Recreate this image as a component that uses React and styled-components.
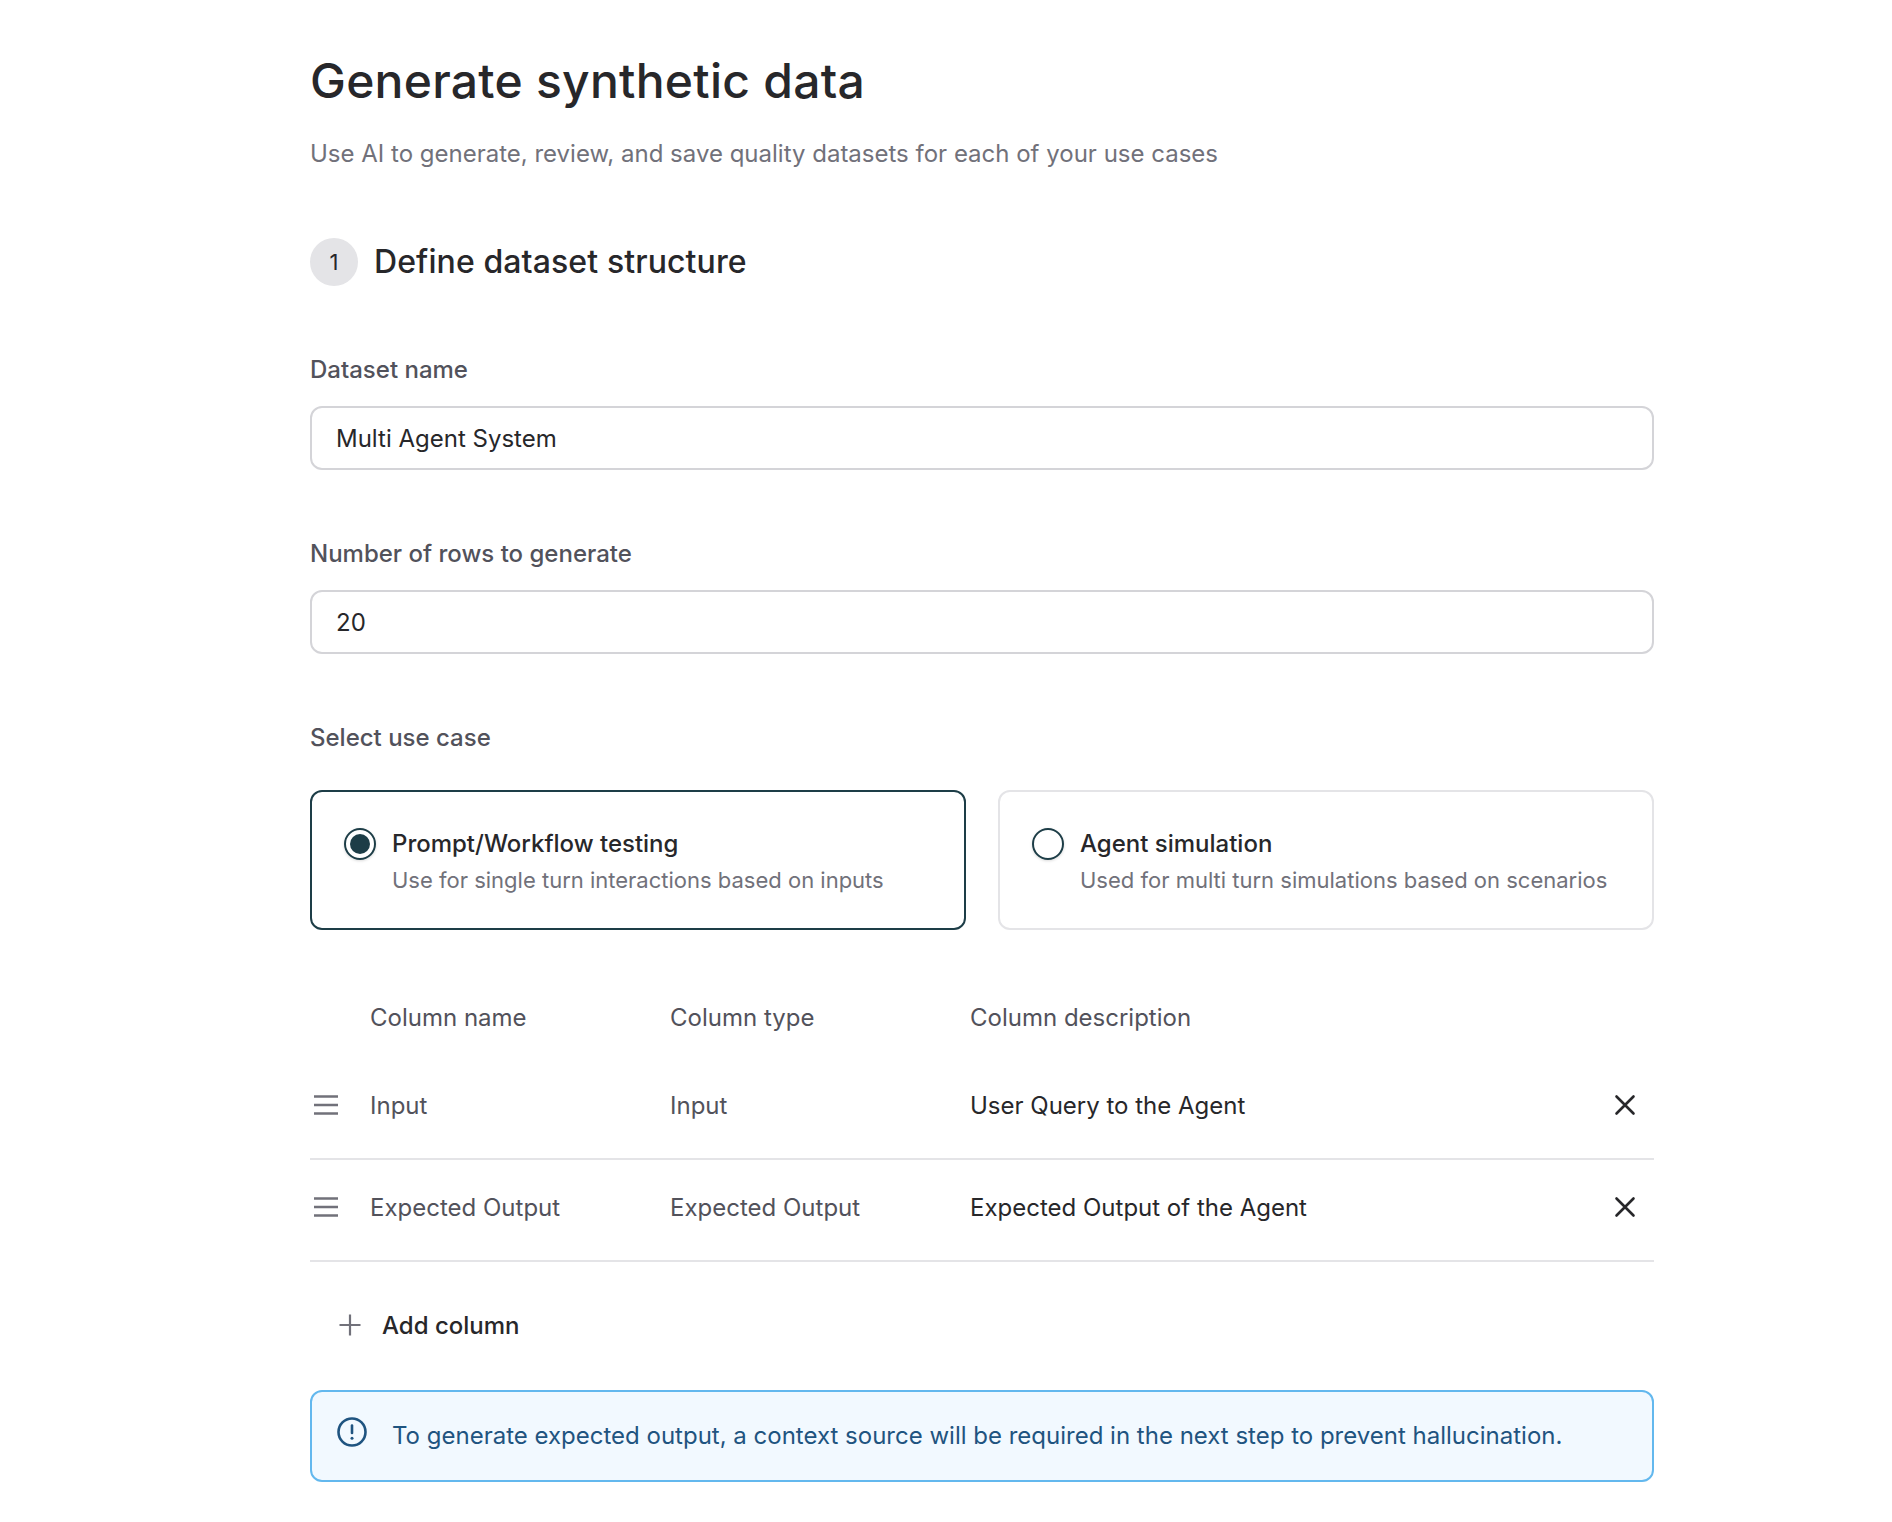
import React from "react"
import styled, { createGlobalStyle } from "styled-components"

const GlobalStyle = createGlobalStyle`
  html, body {
    margin: 0;
    padding: 0;
    background: #fff;
  }
  body {
    font-family: Inter, "Liberation Sans", sans-serif;
    color: #27272a;
  }
`

const Page = styled.main`
  width: 1344px;
  height: 1522px;
  box-sizing: border-box;
  margin-left: 310px;
  padding-top: 48px;
`

const Title = styled.h1`
  margin: 0;
  font-size: 48px;
  line-height: 66px;
  font-weight: 550;
  letter-spacing: 0.26px;
  color: #27272a;
`

const Subtitle = styled.p`
  margin: 24px 0 0;
  font-size: 24px;
  line-height: 32px;
  color: #71717a;
`

const StepHeader = styled.div`
  display: flex;
  align-items: center;
  gap: 16px;
  margin-top: 68px;
`

const StepBadge = styled.span`
  width: 48px;
  height: 48px;
  border-radius: 50%;
  background: #e4e4e7;
  display: flex;
  align-items: center;
  justify-content: center;
  font-size: 22px;
  color: #27272a;
`

const StepTitle = styled.h2`
  margin: 0;
  font-size: 32px;
  line-height: 48px;
  font-weight: 550;
  letter-spacing: 0.1px;
  color: #27272a;
`

const Field = styled.div`
  margin-top: 68px;
`

const Label = styled.label`
  display: block;
  font-size: 24px;
  line-height: 32px;
  font-weight: 500;
  color: #52525b;
`

const TextInput = styled.div`
  box-sizing: border-box;
  height: 64px;
  margin-top: 20px;
  padding: 0 24px;
  display: flex;
  align-items: center;
  border: 2px solid #d4d4d8;
  border-radius: 12px;
  font-size: 24px;
  color: #27272a;
`

const CardRow = styled.div`
  display: grid;
  grid-template-columns: 656px 656px;
  column-gap: 32px;
  margin-top: 36px;
`

const Card = styled.div`
  box-sizing: border-box;
  height: 140px;
  padding: 36px 32px 0;
  display: flex;
  gap: 16px;
  border: 2px solid ${(p) => (p.$active ? "#1d3d47" : "#e4e4e7")};
  border-radius: 12px;
`

const Radio = styled.span`
  box-sizing: border-box;
  flex: none;
  width: 32px;
  height: 32px;
  border-radius: 50%;
  border: 2px solid #1d3d47;
  display: flex;
  align-items: center;
  justify-content: center;
  box-shadow: 0 1px 3px rgba(0, 0, 0, 0.15);
`

const RadioDot = styled.span`
  width: 20px;
  height: 20px;
  border-radius: 50%;
  background: #1d3d47;
`

const CardTitle = styled.div`
  font-size: 24px;
  line-height: 32px;
  font-weight: 500;
  color: #27272a;
`

const CardHint = styled.div`
  margin-top: 4px;
  font-size: 22px;
  line-height: 32px;
  color: #71717a;
`

const ColumnGrid = styled.div`
  display: grid;
  grid-template-columns: 60px 300px 300px 1fr 41px;
  align-items: center;
  font-size: 24px;
  color: #52525b;
`

const HeadRow = styled(ColumnGrid)`
  height: 32px;
  margin-top: 71px;
`

const BodyRow = styled(ColumnGrid)`
  height: 102px;
  box-sizing: border-box;
  padding-bottom: 6px;
  border-bottom: 2px solid #e4e4e7;
`

const FirstRow = styled(BodyRow)`
  margin-top: 25px;
`

const Description = styled.span`
  color: #27272a;
`

const AddButton = styled.div`
  display: flex;
  align-items: center;
  gap: 20px;
  height: 32px;
  margin: 47px 0 0 28px;
  font-size: 24px;
  font-weight: 500;
  color: #27272a;
`

const Alert = styled.div`
  box-sizing: border-box;
  height: 92px;
  margin-top: 49px;
  padding: 24px;
  display: flex;
  gap: 24px;
  background: #f2f9ff;
  border: 2px solid #63b8ee;
  border-radius: 12px;
  font-size: 24px;
  line-height: 40px;
  color: #1f5480;
`

const HandleIcon = () => (
  <svg width="30" height="30" viewBox="0 0 30 30" fill="none" stroke="#71717a" strokeWidth="2.4" style={{ marginLeft: 1 }}>
    <path d="M3 6.5h24M3 15h24M3 23.5h24" />
  </svg>
)

const CloseIcon = () => (
  <svg width="24" height="24" viewBox="0 0 24 24" fill="none" stroke="#27272a" strokeWidth="2.6" strokeLinecap="round">
    <path d="M3.5 3.5l17 17M20.5 3.5l-17 17" />
  </svg>
)

const PlusIcon = () => (
  <svg width="24" height="24" viewBox="0 0 24 24" fill="none" stroke="#71717a" strokeWidth="2.2">
    <path d="M12 1.5v21M1.5 12h21" />
  </svg>
)

const InfoIcon = () => (
  <svg width="32" height="32" viewBox="0 0 32 32" fill="none" stroke="#1f5480" strokeWidth="2.6" strokeLinecap="round">
    <circle cx="16" cy="16" r="13.5" />
    <path d="M16 9.5v7.5" />
    <path d="M16 22.2v.1" strokeWidth="3" />
  </svg>
)

const columns = [
  { name: "Input", type: "Input", description: "User Query to the Agent" },
  { name: "Expected Output", type: "Expected Output", description: "Expected Output of the Agent" },
]

const App = () => {
  return (
    <>
      <GlobalStyle />
      <Page>
        <Title>Generate synthetic data</Title>
        <Subtitle>Use AI to generate, review, and save quality datasets for each of your use cases</Subtitle>

        <StepHeader>
          <StepBadge>1</StepBadge>
          <StepTitle>Define dataset structure</StepTitle>
        </StepHeader>

        <Field>
          <Label>Dataset name</Label>
          <TextInput>Multi Agent System</TextInput>
        </Field>

        <Field>
          <Label>Number of rows to generate</Label>
          <TextInput>20</TextInput>
        </Field>

        <Field>
          <Label>Select use case</Label>
          <CardRow>
            <Card $active>
              <Radio>
                <RadioDot />
              </Radio>
              <div>
                <CardTitle>Prompt/Workflow testing</CardTitle>
                <CardHint>Use for single turn interactions based on inputs</CardHint>
              </div>
            </Card>
            <Card>
              <Radio />
              <div>
                <CardTitle>Agent simulation</CardTitle>
                <CardHint>Used for multi turn simulations based on scenarios</CardHint>
              </div>
            </Card>
          </CardRow>
        </Field>

        <HeadRow>
          <span />
          <span>Column name</span>
          <span>Column type</span>
          <span>Column description</span>
          <span />
        </HeadRow>
        {columns.map((col, i) => {
          const Row = i === 0 ? FirstRow : BodyRow
          return (
            <Row key={col.name}>
              <HandleIcon />
              <span>{col.name}</span>
              <span>{col.type}</span>
              <Description>{col.description}</Description>
              <CloseIcon />
            </Row>
          )
        })}

        <AddButton>
          <PlusIcon />
          Add column
        </AddButton>

        <Alert>
          <InfoIcon />
          To generate expected output, a context source will be required in the next step to prevent hallucination.
        </Alert>
      </Page>
    </>
  )
}

export default App
